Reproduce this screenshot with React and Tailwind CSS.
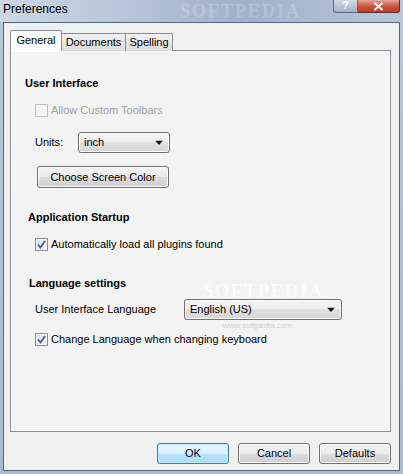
import React from 'react';

const btn =
  'h-[22px] flex items-center justify-center rounded-[3px] border border-[#707070] bg-[linear-gradient(to_bottom,#f2f2f2_0%,#ebebeb_50%,#dddddd_50%,#cfcfcf_100%)] shadow-[inset_0_0_0_1px_#fcfcfc] text-[11px] text-black';

function CheckBox({ checked, disabled }) {
  return (
    <div
      className={
        'w-[13px] h-[13px] border flex items-center justify-center ' +
        (disabled
          ? 'border-[#c0c0c0] bg-[#f4f4f4]'
          : 'border-[#8e8f8f] bg-[linear-gradient(135deg,#d8dde3,#f6f6f6)] shadow-[inset_0_0_0_1px_#f4f4f4]')
      }
    >
      {checked && (
        <svg width="9" height="9" viewBox="0 0 9 9">
          <path d="M1 4.5 L3.5 7.5 L8 1" fill="none" stroke="#4a5f97" strokeWidth="1.8" />
        </svg>
      )}
    </div>
  );
}

function Combo({ value, className }) {
  return (
    <div
      className={
        'relative flex items-center pl-[5px] rounded-[3px] border border-[#707070] bg-[linear-gradient(to_bottom,#f6f6f6_0%,#ececec_50%,#dfdfdf_50%,#d6d6d6_100%)] shadow-[inset_0_0_0_1px_#fcfcfc] text-[11px] text-black ' +
        className
      }
    >
      {value}
      <svg className="absolute right-[6px] top-1/2 -translate-y-1/2" width="8" height="5" viewBox="0 0 8 5">
        <path d="M0 0 H8 L4 4.5 Z" fill="#111" />
      </svg>
    </div>
  );
}

export default function App() {
  return (
    <div className="w-[403px] h-[474px] flex flex-col bg-[linear-gradient(to_bottom,#b8c7d9,#a9bad0)] font-['Liberation_Sans',Arial,sans-serif] overflow-hidden">
      {/* title bar */}
      <div className="relative h-[22px] flex items-start justify-between bg-[linear-gradient(to_right,#cdd8e5_0%,#b4c3d6_35%,#9fb2ca_60%,#b9c7d8_100%)]">
        <span className="pl-[3px] pt-[1px] text-[12px] leading-[16px] text-black">Preferences</span>
        <div className="absolute left-[180px] top-[1px] text-[18px] leading-[20px] font-bold tracking-[2px] text-white/20 font-['Liberation_Serif',serif]">
          SOFTPEDIA
        </div>
        <div className="flex mr-[3px]">
          <div className="w-[25px] h-[13px] flex items-center justify-center rounded-bl-[3px] border border-t-0 border-[#5a6a80] bg-[linear-gradient(to_bottom,#d3dce7,#a2b1c4)] text-white text-[10px] font-bold leading-none">
            ?
          </div>
          <div className="w-[42px] h-[13px] flex items-center justify-center rounded-br-[3px] border border-t-0 border-l-0 border-[#5a3030] bg-[linear-gradient(to_bottom,#e3a597,#c9513a_55%,#bb3f26)]">
            <svg width="11" height="9" viewBox="0 0 11 9">
              <path d="M1.5 1 L9.5 8 M9.5 1 L1.5 8" stroke="#fff" strokeWidth="2" />
            </svg>
          </div>
        </div>
      </div>

      {/* client */}
      <div className="relative flex-1 mx-[3px] mb-[3px] border border-[#56657a] bg-[#f0f0f0] flex flex-col pl-[6px] pt-[7px] text-[11px] text-black">
        {/* tabs */}
        <div className="flex items-end h-[21px] -mb-px relative z-10">
          <div className="h-[21px] w-[52px] border border-b-0 border-[#898c95] bg-[#fcfcfc] flex items-center justify-center pb-[1px] rounded-t-[2px]">
            General
          </div>
          <div className="h-[18px] w-[64px] border border-l-0 border-b-0 border-[#898c95] bg-[linear-gradient(to_bottom,#f2f2f2,#dcdcdc)] flex items-center justify-center rounded-tr-[2px]">
            Documents
          </div>
          <div className="h-[18px] w-[47px] border border-l-0 border-b-0 border-[#898c95] bg-[linear-gradient(to_bottom,#f2f2f2,#dcdcdc)] flex items-center justify-center rounded-tr-[2px]">
            Spelling
          </div>
        </div>

        {/* panel */}
        <div className="relative w-[381px] h-[382px] border border-[#898c95] bg-[#f3f3f3] shadow-[inset_0_0_0_1px_#ffffff] flex flex-col">
          <div className="ml-[14px] mt-[26px] h-[13px] leading-[13px] font-bold">User Interface</div>

          <div className="ml-[24px] mt-[14px] h-[13px] flex items-center gap-[3px] text-[#a0a0a0]">
            <CheckBox disabled />
            <span>Allow Custom Toolbars</span>
          </div>

          <div className="ml-[24px] mt-[15px] h-[21px] flex items-center">
            <span className="w-[43px]">Units:</span>
            <Combo value="inch" className="w-[92px] h-[21px]" />
          </div>

          <button className={btn + ' ml-[26px] mt-[13px] w-[132px]'}>Choose Screen Color</button>

          <div className="ml-[17px] mt-[23px] h-[13px] leading-[13px] font-bold">Application Startup</div>

          <div className="ml-[24px] mt-[14px] h-[13px] flex items-center gap-[3px]">
            <CheckBox checked />
            <span>Automatically load all plugins found</span>
          </div>

          <div className="ml-[18px] mt-[26px] h-[13px] leading-[13px] font-bold">Language settings</div>

          <div className="ml-[24px] mt-[9px] h-[21px] flex items-center">
            <span className="w-[149px]">User Interface Language</span>
            <Combo value="English (US)" className="w-[158px] h-[21px]" />
          </div>

          <div className="ml-[24px] mt-[13px] h-[13px] flex items-center gap-[3px]">
            <CheckBox checked />
            <span>Change Language when changing keyboard</span>
          </div>

          <div className="absolute left-[192px] top-[232px] text-[18px] font-bold tracking-[2px] text-white/70 font-['Liberation_Serif',serif] leading-[16px]">
            SOFTPEDIA
          </div>
          <div className="absolute left-[212px] top-[270px] text-[8px] text-[#d0d0d0] leading-[9px]">www.softpedia.com</div>
        </div>

        {/* bottom buttons */}
        <div className="flex justify-end gap-[9px] pr-[8px] mt-[11px]">
          <button className="w-[72px] h-[21px] flex items-center justify-center rounded-[3px] border border-[#3c7fb1] bg-[linear-gradient(to_bottom,#eaf6fd_0%,#d9f0fc_50%,#bee6fd_50%,#a7d9f5_100%)] shadow-[inset_0_0_0_1px_#c4ecfb] text-[11px]">
            OK
          </button>
          <button className={btn + ' !h-[21px] w-[72px]'}>Cancel</button>
          <button className={btn + ' !h-[21px] w-[72px]'}>Defaults</button>
        </div>
      </div>
    </div>
  );
}
